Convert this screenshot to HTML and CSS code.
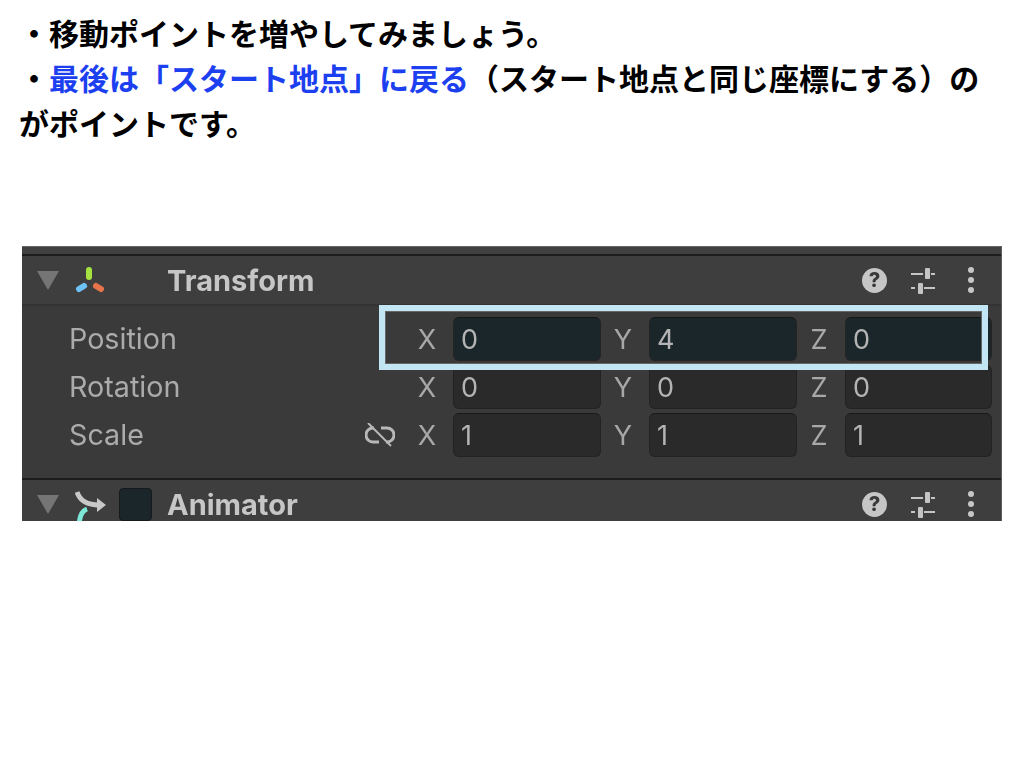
FILE: index.html
```html
<!DOCTYPE html>
<html lang="ja">
<head>
    <meta charset="UTF-8">
    <meta name="viewport" content="width=device-width, initial-scale=1.0">
    <title>移動ポイント</title>
    <link rel="stylesheet" href="styles.css">
</head>
<body>
    <div class="note">
        <p>・移動ポイントを増やしてみましょう。</p>
        <p>・<span class="accent">最後は「スタート地点」に戻る</span>（スタート地点と同じ座標にする）のがポイントです。</p>
    </div>

    <div class="inspector">
        <div class="top-strip"></div>

        <div class="component-header">
            <div class="fold"></div>
            <svg class="comp-icon" viewBox="0 0 32 48">
                <g fill="none" stroke-width="6" stroke-linecap="round">
                    <path d="M14 14V21" stroke="#a6e340"/>
                    <path d="M4 33L9 30" stroke="#6dc2f6"/>
                    <path d="M21 30L26 33" stroke="#e8744a"/>
                </g>
            </svg>
            <div class="enable-slot"></div>
            <div class="comp-title">Transform</div>
            <div class="comp-tools">
                <span class="help">?</span>
                <svg class="sliders" viewBox="0 0 26 28">
                    <path d="M1 8H13M21 8H25M1 22H5M14 22H25" stroke="#c4c4c4" stroke-width="2" fill="none"/>
                    <rect x="15" y="2" width="5" height="11" rx="1" fill="#c4c4c4"/>
                    <rect x="8" y="17" width="5" height="11" rx="1" fill="#c4c4c4"/>
                </svg>
                <div class="dots"><i></i><i></i><i></i></div>
            </div>
        </div>

        <div class="component-body">
            <div class="row">
                <div class="row-label">Position</div>
                <div class="field"><span class="axis">X</span><div class="value active">0</div></div>
                <div class="field"><span class="axis">Y</span><div class="value active">4</div></div>
                <div class="field"><span class="axis">Z</span><div class="value active">0</div></div>
            </div>
            <div class="row">
                <div class="row-label">Rotation</div>
                <div class="field"><span class="axis">X</span><div class="value">0</div></div>
                <div class="field"><span class="axis">Y</span><div class="value">0</div></div>
                <div class="field"><span class="axis">Z</span><div class="value">0</div></div>
            </div>
            <div class="row">
                <div class="row-label">
                    Scale
                    <svg class="link-off" viewBox="0 0 30 24">
                        <g fill="none" stroke="#b8b8b8" stroke-width="3">
                            <path d="M9 5H8A7 7 0 0 0 8 19H14"/>
                            <path d="M16 5H22A7 7 0 0 1 22 19H21"/>
                        </g>
                        <path d="M3 0L26 23" stroke="#b8b8b8" stroke-width="2"/>
                    </svg>
                </div>
                <div class="field"><span class="axis">X</span><div class="value">1</div></div>
                <div class="field"><span class="axis">Y</span><div class="value">1</div></div>
                <div class="field"><span class="axis">Z</span><div class="value">1</div></div>
            </div>
        </div>

        <div class="component-header animator">
            <div class="fold"></div>
            <svg class="comp-icon" viewBox="0 0 32 48">
                <path d="M2 12C5 21 12 25 24 25" fill="none" stroke="#c8c8c8" stroke-width="5"/>
                <path d="M22 18L31 25L22 32Z" fill="#c8c8c8"/>
                <path d="M4 48C4 38 6 31 12 29" fill="none" stroke="#7de8d8" stroke-width="5"/>
            </svg>
            <div class="enable-slot checkbox"></div>
            <div class="comp-title">Animator</div>
            <div class="comp-tools">
                <span class="help">?</span>
                <svg class="sliders" viewBox="0 0 26 28">
                    <path d="M1 8H13M21 8H25M1 22H5M14 22H25" stroke="#c4c4c4" stroke-width="2" fill="none"/>
                    <rect x="15" y="2" width="5" height="11" rx="1" fill="#c4c4c4"/>
                    <rect x="8" y="17" width="5" height="11" rx="1" fill="#c4c4c4"/>
                </svg>
                <div class="dots"><i></i><i></i><i></i></div>
            </div>
        </div>

        <!-- 水色の枠 -->
        <div class="highlight"></div>
    </div>
</body>
</html>
```

FILE: styles.css
```css
body {
    margin: 0;
    background-color: #ffffff;
    font-family: "Liberation Sans", "Noto Sans CJK JP", sans-serif;
}

.note {
    padding: 10px 30px 0 19px;
    font-family: "Noto Sans CJK JP", sans-serif;
    font-size: 30px;
    font-weight: 700;
    line-height: 45px;
    color: #000000;
}

.note p {
    margin: 0;
}

.accent {
    color: #1c3ff0;
}

.inspector {
    position: relative;
    width: 980px;
    height: 275px;
    margin: 101px 0 0 22px;
    box-sizing: border-box;
    overflow: hidden;
    background-color: #3a3a3a;
    border-right: 1px solid #5e5e5e;
    font-family: Inter, sans-serif;
    filter: blur(0.4px);
}

.top-strip {
    height: 7px;
    background-color: #404040;
    border-top: 1px solid #666666;
    border-bottom: 2px solid #1c1c1c;
}

.component-header {
    display: flex;
    align-items: center;
    height: 48px;
    padding-left: 15px;
    background-color: #3e3e3e;
    border-bottom: 2px solid #333333;
}

.component-header.animator {
    border-bottom: none;
}

.fold {
    width: 0;
    height: 0;
    border-left: 11px solid transparent;
    border-right: 11px solid transparent;
    border-top: 19px solid #757575;
}

.comp-icon {
    width: 32px;
    height: 48px;
    margin-left: 16px;
}

.enable-slot {
    width: 33px;
    height: 33px;
    margin-left: 12px;
    box-sizing: border-box;
}

.checkbox {
    background-color: #1b262b;
    border: 1px solid #151a1c;
    border-radius: 4px;
}

.comp-title {
    margin-left: 15px;
    font-size: 29px;
    font-weight: 700;
    color: #c6c6c6;
}

.comp-tools {
    display: flex;
    align-items: center;
    margin-left: auto;
    padding-right: 27px;
}

.help {
    width: 25px;
    height: 25px;
    border-radius: 50%;
    background-color: #c6c6c6;
    color: #3a3a3a;
    font-size: 20px;
    font-weight: 800;
    line-height: 25px;
    text-align: center;
}

.sliders {
    width: 26px;
    height: 28px;
    margin-left: 23px;
}

.dots {
    display: flex;
    flex-direction: column;
    gap: 4px;
    margin-left: 32px;
}

.dots i {
    display: block;
    width: 6px;
    height: 6px;
    border-radius: 50%;
    background-color: #c6c6c6;
}

.component-body {
    height: 161px;
    padding-top: 11px;
    background-color: #3a3a3a;
    border-bottom: 2px solid #1c1c1c;
}

.row {
    display: grid;
    grid-template-columns: 383px repeat(3, 196px);
    height: 44px;
    margin-bottom: 4px;
}

.row-label {
    display: flex;
    align-items: center;
    justify-content: space-between;
    padding: 0 10px 2px 47px;
    font-size: 28.7px;
    color: #ababab;
}

.link-off {
    width: 30px;
    height: 24px;
    margin-top: 2px;
}

.field {
    display: flex;
    align-items: center;
}

.field:last-child .value {
    width: 147px;
}

.axis {
    width: 48px;
    padding-right: 4px;
    box-sizing: border-box;
    text-align: center;
    font-size: 27px;
    color: #a8a8a8;
}

.value {
    width: 148px;
    height: 44px;
    padding-left: 7px;
    box-sizing: border-box;
    background-color: #2a2a2a;
    border: 1px solid #232323;
    border-top-color: #191919;
    border-radius: 6px;
    font-size: 27px;
    line-height: 44px;
    color: #b4b4b4;
}

.value.active {
    background-color: #1b262b;
    border-color: #242424;
    border-top-color: #161616;
}

.highlight {
    position: absolute;
    left: 357px;
    top: 59px;
    width: 609px;
    height: 65px;
    box-sizing: border-box;
    border: 6px solid #c3e6f4;
    box-shadow: inset 0 0 0 1px #666666;
}
```
